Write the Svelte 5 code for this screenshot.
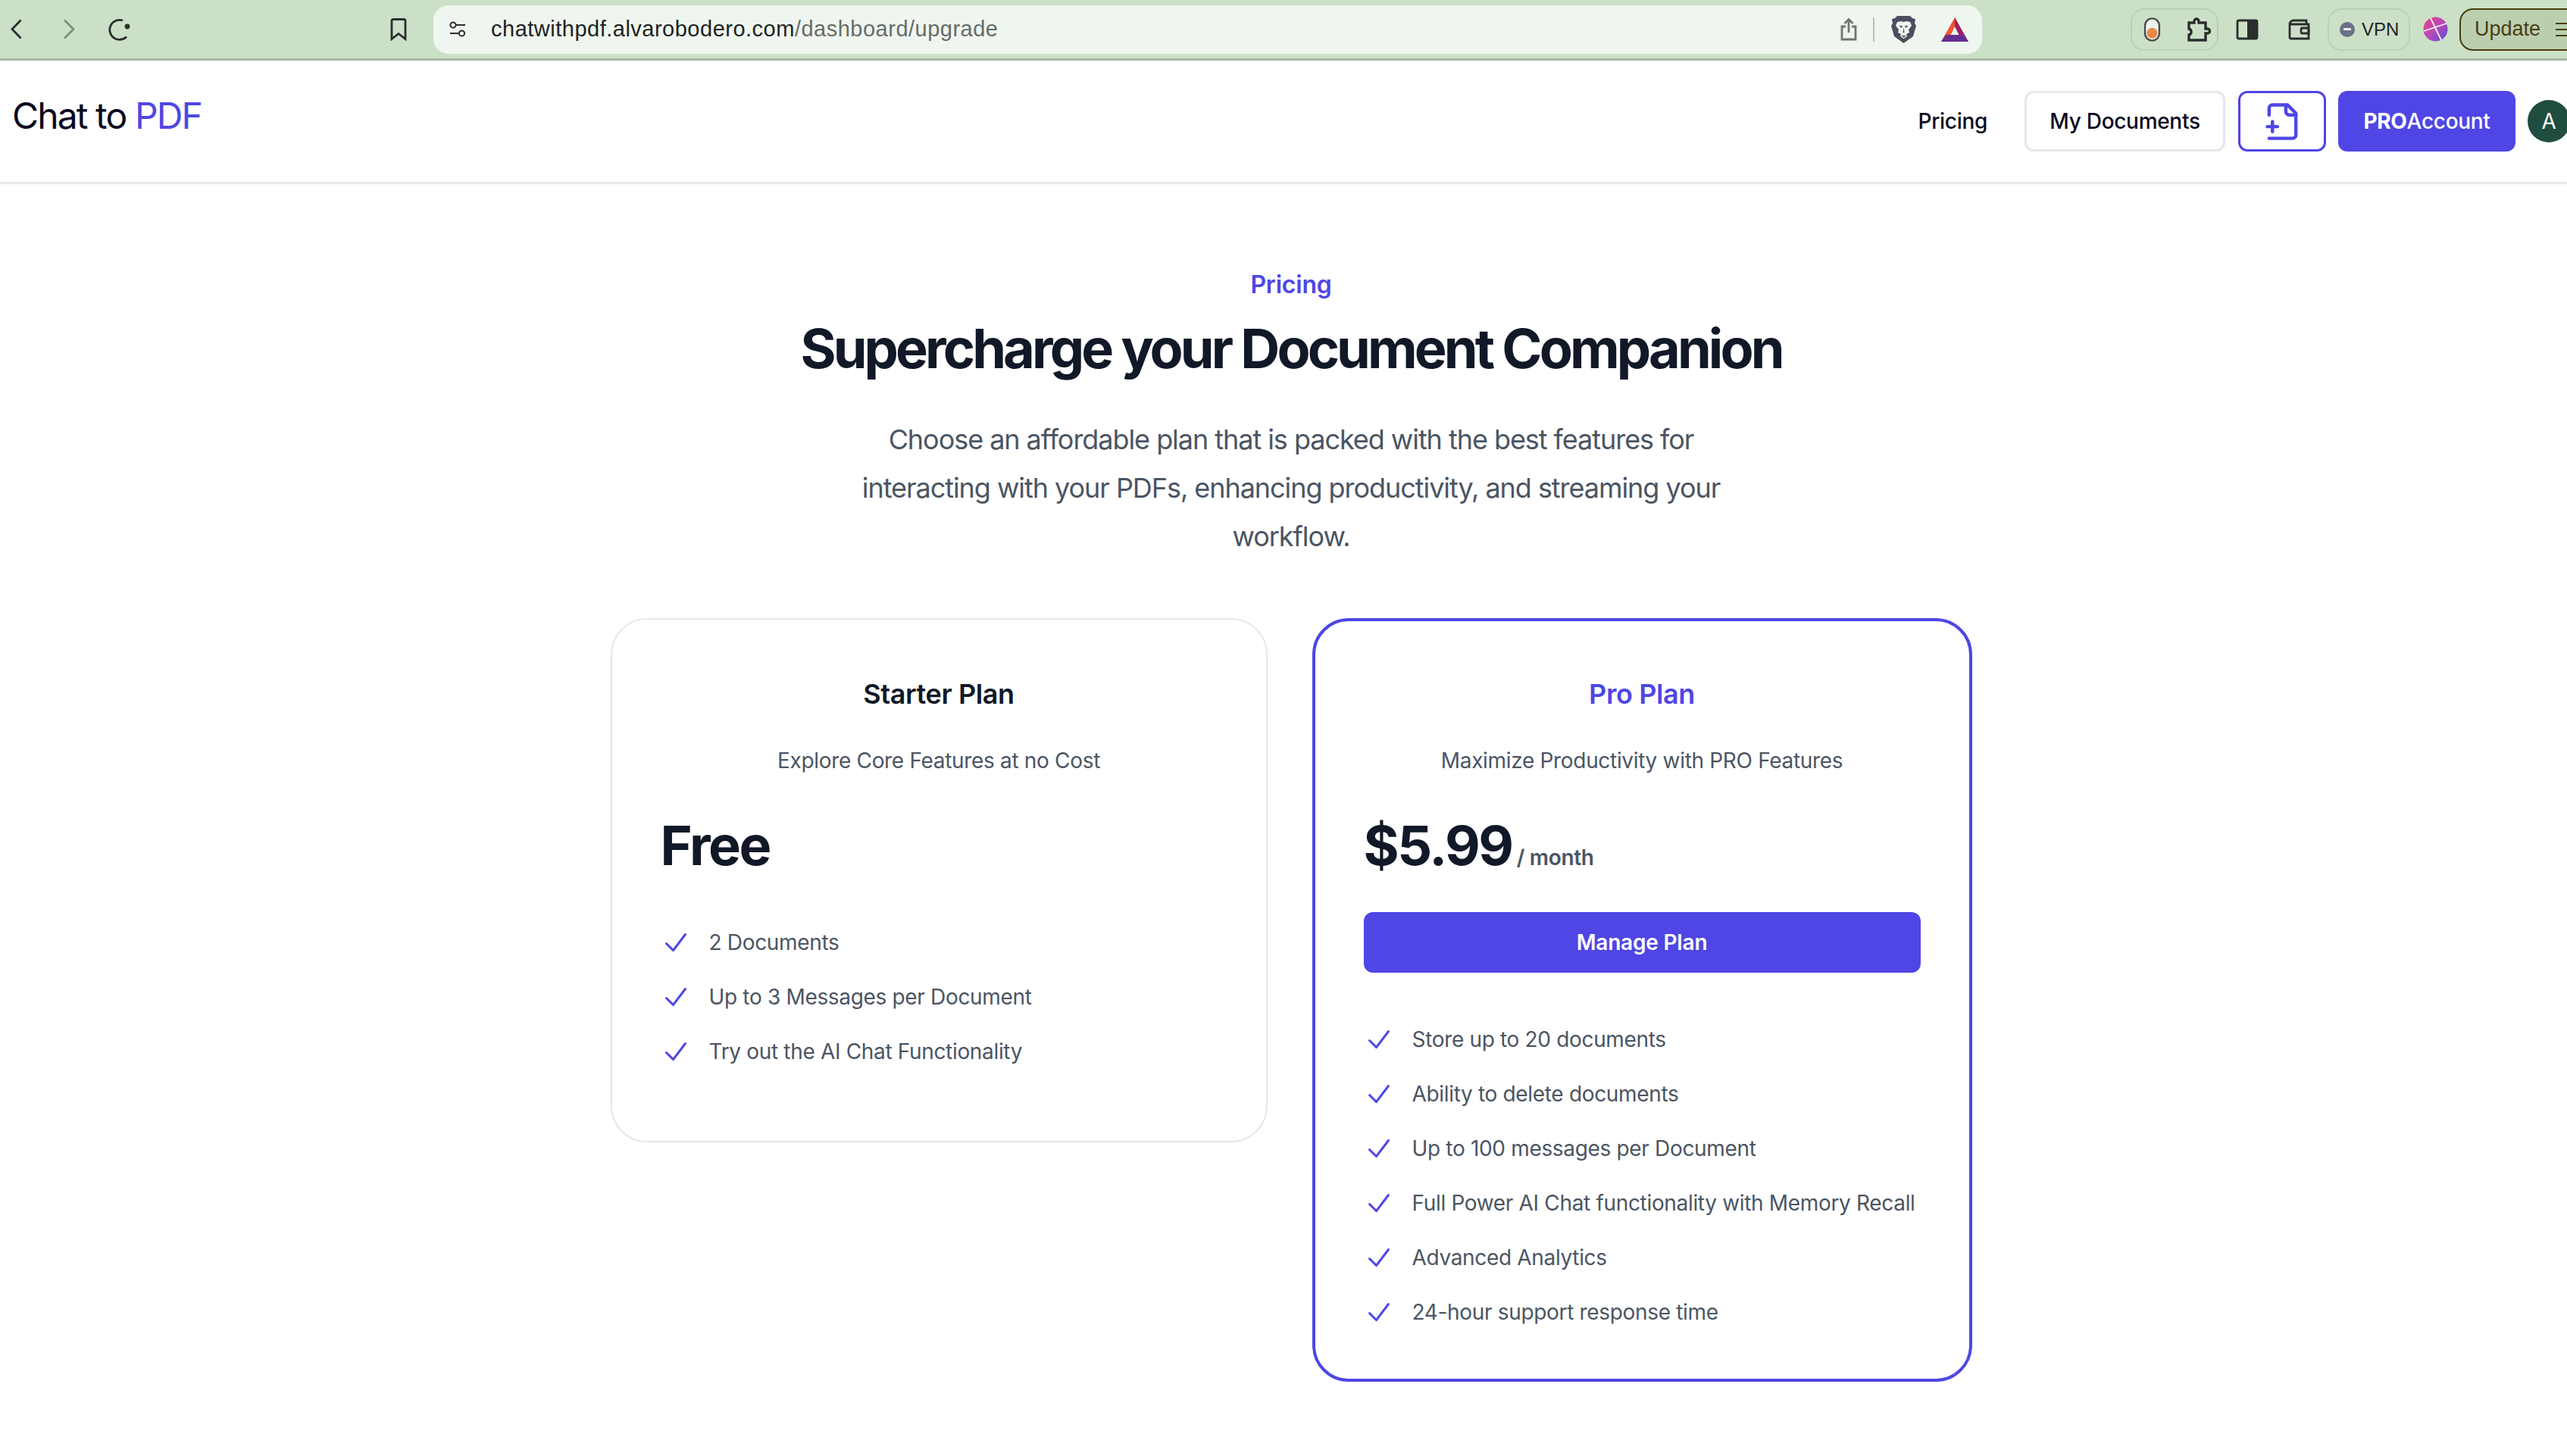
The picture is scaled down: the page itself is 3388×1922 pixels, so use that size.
<script>
	const starterFeatures = ['2 Documents', 'Up to 3 Messages per Document', 'Try out the AI Chat Functionality'];
	const proFeatures = [
		'Store up to 20 documents',
		'Ability to delete documents',
		'Up to 100 messages per Document',
		'Full Power AI Chat functionality with Memory Recall',
		'Advanced Analytics',
		'24-hour support response time'
	];
</script>

{#snippet check()}
	<svg class="check" viewBox="0 0 20 20" fill="currentColor">
		<path
			fill-rule="evenodd"
			clip-rule="evenodd"
			d="M16.704 4.153a.75.75 0 01.143 1.052l-8 10.5a.75.75 0 01-1.127.075l-4.5-4.5a.75.75 0 011.06-1.06l3.894 3.893 7.48-9.817a.75.75 0 011.05-.143z"
		/>
	</svg>
{/snippet}

<div class="page">
	<!-- browser toolbar -->
	<header class="chrome">
		<div class="chrome-left">
			<svg class="ic back" viewBox="0 0 15 27"><path d="M13.5 1.5 2 13.5l11.5 12" /></svg>
			<svg class="ic forward" viewBox="0 0 16 27"><path d="M2 1.5l12 12-12 12" /></svg>
			<svg class="ic reload" viewBox="0 0 30 30">
				<path d="M24 24.5A13 13 0 1 1 19 3" />
				<circle cx="25" cy="11" r="3.4" class="solid" />
			</svg>
			<svg class="ic bookmark" viewBox="0 0 22 30"><path d="M2 3.5q0-2 2-2h14q2 0 2 2v24l-9-7-9 7z" /></svg>
		</div>
		<div class="address">
			<svg class="ic tune" viewBox="0 0 22 22">
				<circle cx="5" cy="5" r="3.6" />
				<path d="M9 5h12M1 16h11" />
				<circle cx="16.5" cy="16" r="3.6" />
			</svg>
			<span class="url">chatwithpdf.alvarobodero.com<span class="url-path">/dashboard/upgrade</span></span>
			<svg class="ic share" viewBox="0 0 22 30">
				<path d="M11 19V2M5.500 7 11 1.500 16.500 7M7 11H2v17h18V11h-5" />
			</svg>
			<span class="divider"></span>
			<svg class="brave" viewBox="0 0 33 36">
				<path
					fill="#4a4e5e"
					d="M8 0h17l3 3 4 1-1 6 2 3-4 14-7 5-5.500 4-5.500-4-7-5L0 13l2-3-1-6 4-1z"
				/>
				<path
					fill="#f4f4f2"
					d="M8 8l5-1 3.500 1L20 7l5 1 2 5-4 5 1 4-4 2 1 3-4.500 3-4.500-3 1-3-4-2 1-4-4-5z"
				/>
				<path fill="#4a4e5e" d="M10 13h5l-1 3zM23 13h-5l1 3zM16.500 15l1 7h-2zM13 26h7l-3.500 2.500z" />
			</svg>
			<svg class="bat" viewBox="0 0 36 32">
				<path fill="#f0562c" d="M18 0 0 32h8L18 12z" />
				<path fill="#9e1f63" d="M18 0l18 32h-8L18 12z" />
				<path fill="#662d91" d="M0 32h36l-6-9H6z" />
			</svg>
		</div>
		<div class="chrome-right">
			<div class="pill ext-pill">
				<svg class="toggle" viewBox="0 0 23 34">
					<rect x="1.500" y="1.500" width="20" height="31" rx="10" fill="#eef2ec" stroke="#4a4a4a" stroke-width="2.500" />
					<circle cx="11.500" cy="22" r="7.500" fill="#e88a45" />
				</svg>
				<svg class="ic puzzle" viewBox="0 0 32 32">
					<path d="M3 7h7V5a3 3 0 0 1 6 0v2h9v8h2.500a2.500 2.500 0 0 1 0 6H25v9H3v-7a4 4 0 0 0 3-4 4 4 0 0 0-3-4z" />
				</svg>
			</div>
			<svg class="ic sidebar" viewBox="0 0 30 28">
				<rect x="2" y="2" width="26" height="24" rx="2" />
				<rect x="15" y="2" width="13" height="24" class="solid" />
			</svg>
			<svg class="ic wallet" viewBox="0 0 29 28">
				<path d="M2 7a5 5 0 0 1 5-5h17v5M2 7v17a2 2 0 0 0 2 2h23V7H4z" />
				<path d="M27 12h-8a2 2 0 0 0-2 2v3a2 2 0 0 0 2 2h8z" />
			</svg>
			<div class="pill vpn-pill">
				<span class="vpn-dot"><span class="vpn-minus"></span></span>
				<span class="vpn-text">VPN</span>
			</div>
			<svg class="rainbow" viewBox="0 0 33 33">
				<defs>
					<linearGradient id="rainbow-fill" x1="0" y1="0" x2="1" y2="1">
						<stop offset="0" stop-color="#e8417f" />
						<stop offset="0.5" stop-color="#b848b8" />
						<stop offset="1" stop-color="#5a4fd8" />
					</linearGradient>
				</defs>
				<circle cx="16.500" cy="16.500" r="16" fill="url(#rainbow-fill)" />
				<path d="M1 19 31 9M10 2l14 29" stroke="#f3f3f3" stroke-width="1.800" fill="none" />
			</svg>
			<div class="update">
				<span>Update</span>
				<span class="burger"></span>
			</div>
		</div>
	</header>

	<!-- site nav -->
	<nav class="nav">
		<div class="logo">Chat to <span class="accent">PDF</span></div>
		<div class="nav-links">
			<span class="nav-pricing">Pricing</span>
			<span class="btn btn-outline">My Documents</span>
			<span class="btn btn-icon">
				<svg viewBox="0 0 24 24" fill="none" stroke="currentColor" stroke-width="2" stroke-linecap="round" stroke-linejoin="round">
					<path d="M4 22h14a2 2 0 0 0 2-2V7l-5-5H6a2 2 0 0 0-2 2v4" />
					<path d="M14 2v4a2 2 0 0 0 2 2h4" />
					<path d="M3 15h6" />
					<path d="M6 12v6" />
				</svg>
			</span>
			<span class="btn btn-primary"><b>PRO</b>Account</span>
			<span class="avatar">A</span>
		</div>
	</nav>

	<main class="main">
		<div class="eyebrow">Pricing</div>
		<h1 class="title">Supercharge your Document Companion</h1>
		<p class="lead">
			Choose an affordable plan that is packed with the best features for interacting with your PDFs,
			enhancing productivity, and streaming your workflow.
		</p>

		<div class="plans">
			<section class="card card-starter">
				<h2 class="plan-name">Starter Plan</h2>
				<p class="plan-desc">Explore Core Features at no Cost</p>
				<div class="price"><span class="amount">Free</span></div>
				<ul class="features">
					{#each starterFeatures as feature}
						<li>{@render check()}{feature}</li>
					{/each}
				</ul>
			</section>

			<section class="card card-pro">
				<h2 class="plan-name accent">Pro Plan</h2>
				<p class="plan-desc">Maximize Productivity with PRO Features</p>
				<div class="price"><span class="amount">$5.99</span><span class="per">/ month</span></div>
				<div class="manage">Manage Plan</div>
				<ul class="features">
					{#each proFeatures as feature}
						<li>{@render check()}{feature}</li>
					{/each}
				</ul>
			</section>
		</div>
	</main>
</div>

<style>
	:global(body) {
		margin: 0;
		background: #fff;
		overflow: hidden;
	}

	.page {
		width: 3408px;
		height: 1922px;
		overflow: hidden;
		font-family: Inter, 'Liberation Sans', sans-serif;
		color: #111827;
	}

	.accent {
		color: #4f46e5;
	}

	/* browser toolbar */
	.chrome {
		display: flex;
		align-items: center;
		box-sizing: border-box;
		height: 80px;
		background: #cce0c8;
		border-bottom: 3px solid #a8b8a5;
	}

	.chrome-left {
		flex: none;
		display: flex;
		align-items: center;
		box-sizing: border-box;
		width: 572px;
		padding-left: 14px;
	}

	.ic {
		flex: none;
		fill: none;
		stroke: #2a2e2c;
		stroke-width: 2.8;
	}

	.ic .solid {
		fill: #2a2e2c;
		stroke: none;
	}

	.back {
		width: 15px;
		height: 27px;
	}

	.forward {
		width: 16px;
		height: 27px;
		margin-left: 54px;
		stroke: #7f9080;
	}

	.reload {
		width: 30px;
		height: 30px;
		margin-left: 44px;
	}

	.bookmark {
		width: 22px;
		height: 30px;
		margin-left: 342px;
	}

	.address {
		flex: none;
		display: flex;
		align-items: center;
		box-sizing: border-box;
		width: 2044px;
		height: 64px;
		padding: 0 18px 0 21px;
		background: #eff6ef;
		border-radius: 20px;
	}

	.tune {
		width: 22px;
		height: 22px;
		stroke-width: 2;
	}

	.url {
		flex: 1;
		margin-left: 33px;
		font-family: 'Liberation Sans', Arial, sans-serif;
		font-size: 29px;
		letter-spacing: 0.5px;
		color: #202322;
	}

	.url-path {
		color: #666c68;
	}

	.share {
		width: 22px;
		height: 30px;
		stroke: #6f7570;
	}

	.divider {
		width: 2px;
		height: 32px;
		margin-left: 21px;
		background: #b9c2ba;
	}

	.brave {
		width: 33px;
		height: 36px;
		margin-left: 22px;
	}

	.bat {
		width: 36px;
		height: 32px;
		margin-left: 33px;
	}

	.chrome-right {
		flex: none;
		display: flex;
		align-items: center;
		margin-left: 196px;
	}

	.pill {
		display: flex;
		align-items: center;
		box-sizing: border-box;
		height: 56px;
		border: 2px solid #bcd0b8;
		border-radius: 18px;
	}

	.ext-pill {
		width: 116px;
		padding-left: 15px;
	}

	.toggle {
		width: 23px;
		height: 32px;
	}

	.puzzle {
		width: 32px;
		height: 32px;
		margin-left: 34px;
		stroke-width: 3.4;
	}

	.sidebar {
		width: 30px;
		height: 28px;
		margin-left: 23px;
	}

	.wallet {
		width: 29px;
		height: 28px;
		margin-left: 39px;
	}

	.vpn-pill {
		width: 109px;
		margin-left: 23px;
		padding-left: 14px;
	}

	.vpn-dot {
		display: flex;
		align-items: center;
		justify-content: center;
		width: 20px;
		height: 20px;
		border-radius: 50%;
		background: #6a7088;
	}

	.vpn-minus {
		width: 10px;
		height: 3px;
		background: #eef2ee;
	}

	.vpn-text {
		margin-left: 9px;
		font-family: 'Liberation Sans', Arial, sans-serif;
		font-size: 24px;
		color: #20242a;
	}

	.rainbow {
		width: 33px;
		height: 33px;
		margin-left: 17px;
	}

	.update {
		display: flex;
		align-items: center;
		gap: 20px;
		box-sizing: border-box;
		width: 170px;
		height: 56px;
		margin-left: 15px;
		padding-left: 18px;
		background: #bbcfae;
		border: 2px solid #4b3c12;
		border-radius: 18px;
		font-family: 'Liberation Sans', Arial, sans-serif;
		font-size: 27px;
		color: #4b3c12;
	}

	.burger {
		width: 20px;
		height: 14px;
		border-top: 2px solid #4b3c12;
		border-bottom: 2px solid #4b3c12;
		background: linear-gradient(#4b3c12, #4b3c12) center / 100% 2px no-repeat;
	}

	/* site nav */
	.nav {
		display: flex;
		align-items: center;
		justify-content: space-between;
		box-sizing: border-box;
		height: 163px;
		padding: 0 16px;
		border-bottom: 3px solid #e5e7eb;
		box-shadow: 0 2px 4px rgba(0, 0, 0, 0.03);
	}

	.logo {
		margin-bottom: 15px;
		font-size: 48px;
		line-height: 64px;
		letter-spacing: -1.9px;
		color: #0a0a1e;
	}

	.nav-links {
		display: flex;
		align-items: center;
		font-size: 28px;
		font-weight: 500;
		letter-spacing: -0.3px;
		color: #0a0a1e;
	}

	.nav-pricing {
		margin-right: 49px;
	}

	.btn {
		display: flex;
		align-items: center;
		justify-content: center;
		box-sizing: border-box;
		height: 80px;
		border-radius: 12px;
	}

	.btn-outline {
		width: 265px;
		border: 3px solid #e5e7eb;
	}

	.btn-icon {
		width: 116px;
		margin-left: 17px;
		border: 3px solid #4f46e5;
		color: #4f46e5;
	}

	.btn-icon svg {
		width: 53px;
		height: 53px;
	}

	.btn-primary {
		width: 234px;
		margin-left: 16px;
		background: #4f46e5;
		color: #fff;
	}

	.avatar {
		display: flex;
		align-items: center;
		justify-content: center;
		width: 56px;
		height: 56px;
		margin-left: 16px;
		border-radius: 50%;
		background: #1f4d40;
		color: #fff;
		font-weight: 400;
	}

	/* pricing */
	.main {
		padding-top: 105px;
		text-align: center;
	}

	.eyebrow {
		font-size: 32px;
		line-height: 56px;
		font-weight: 600;
		letter-spacing: -0.2px;
		color: #4f46e5;
	}

	.title {
		margin: 16px 0 0;
		font-size: 72px;
		line-height: 80px;
		font-weight: 700;
		letter-spacing: -3.9px;
		color: #111827;
	}

	.lead {
		width: 1152px;
		margin: 48px auto 0;
		font-size: 36px;
		line-height: 64px;
		letter-spacing: -1.05px;
		color: #4b5563;
	}

	.plans {
		display: grid;
		grid-template-columns: 867px 871px;
		gap: 59px;
		align-items: start;
		justify-content: center;
		margin-top: 76px;
		text-align: left;
	}

	.card {
		box-sizing: border-box;
		border-radius: 48px;
	}

	.card-starter {
		padding: 66px 64px 94px;
		border: 2px solid #e5e7eb;
	}

	.card-pro {
		padding: 64px;
		border: 4px solid #4f46e5;
	}

	.plan-name {
		margin: 0;
		font-size: 36px;
		line-height: 64px;
		font-weight: 600;
		letter-spacing: -0.4px;
		text-align: center;
	}

	.plan-desc {
		margin: 32px 0 0;
		font-size: 28px;
		line-height: 48px;
		letter-spacing: -0.32px;
		color: #4b5563;
		text-align: center;
	}

	.price {
		display: flex;
		align-items: baseline;
		gap: 6px;
		margin-top: 48px;
	}

	.amount {
		font-size: 72px;
		line-height: 80px;
		font-weight: 700;
		letter-spacing: -2.4px;
	}

	.per {
		font-size: 28px;
		line-height: 48px;
		font-weight: 600;
		letter-spacing: -0.3px;
		color: #4b5563;
	}

	.manage {
		margin-top: 48px;
		height: 80px;
		border-radius: 12px;
		background: #4f46e5;
		color: #fff;
		font-size: 28px;
		font-weight: 600;
		line-height: 80px;
		letter-spacing: -0.2px;
		text-align: center;
	}

	.features {
		display: flex;
		flex-direction: column;
		gap: 24px;
		margin: 64px 0 0;
		padding: 0;
		list-style: none;
		font-size: 28px;
		line-height: 48px;
		letter-spacing: -0.33px;
		color: #4b5563;
	}

	.features li {
		display: flex;
		gap: 24px;
	}

	.check {
		flex: none;
		width: 40px;
		height: 48px;
		color: #4f46e5;
	}
</style>
